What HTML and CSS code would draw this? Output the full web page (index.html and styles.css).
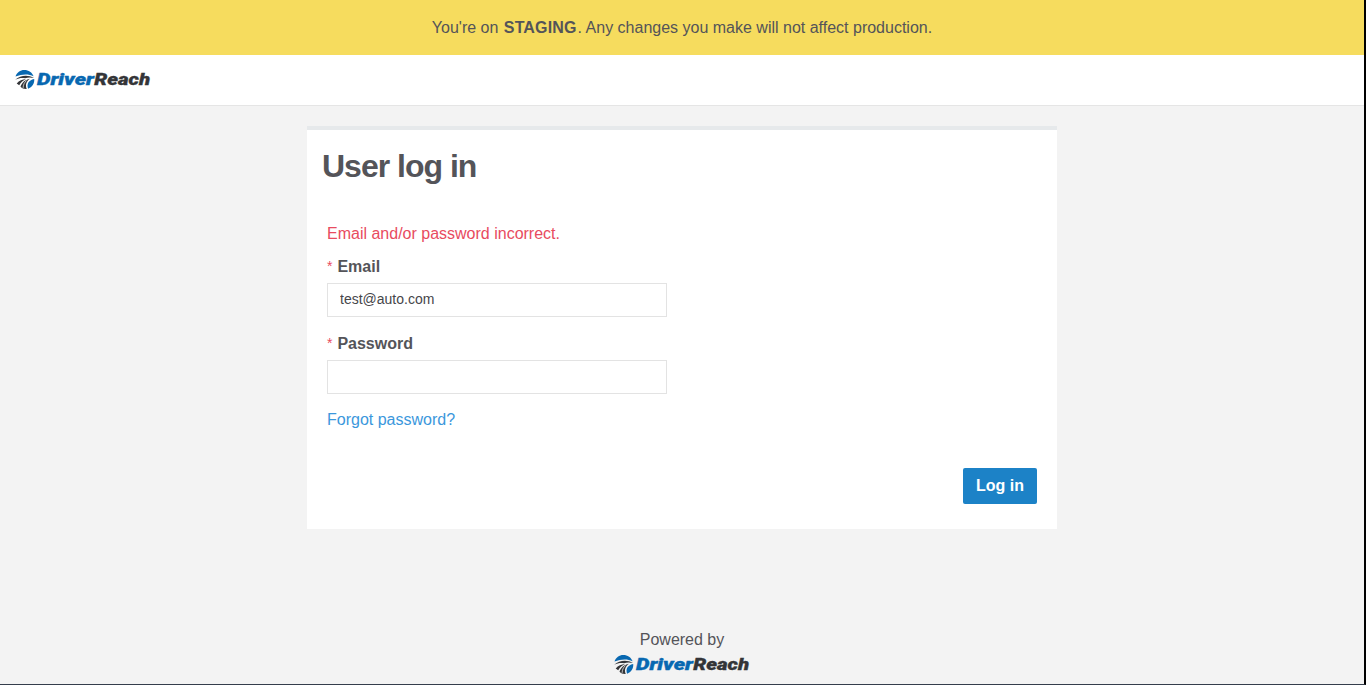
FILE: index.html
```html
<!DOCTYPE html>
<html lang="en">
<head>
<meta charset="utf-8">
<title>DriverReach - User log in</title>
<link rel="stylesheet" href="styles.css">
</head>
<body>
<div class="page">
  <div class="notice"><p>You're on <strong>STAGING</strong>. Any changes you make will not affect production.</p></div>
  <header class="topbar">
    <svg class="logo" viewBox="0 0 136 22" role="img" aria-label="DriverReach">
      <path class="logo-blue" d="M.5 7.500C1.900 3.400 5.200 1 9.300 1c4.300 0 7.900 2.400 9.300 6.300C13.500 4.600 7 4.900.5 7.500z"/>
      <path class="logo-dark" d="M.2 10.700C5.200 6.600 12.700 5.300 19 9.100c-3.300-1-6.300-.9-8.900.2C6.700 8.700 3.500 9.300.2 10.700z"/>
      <path class="logo-dark" d="M1.700 14.500c2.500-2.700 5.800-4.200 9.200-4.400-2.700 1.400-5.100 3.300-6.700 6.100z"/>
      <path class="logo-dark" d="M5.500 17.800c1.200-3.600 4-6.900 9.500-8-4 2.700-4.800 6.300-3.300 10.100-2.300.2-4.500-.4-6.200-2.100z"/>
      <path class="logo-blue" d="M19.200 10c.5 4.600-2.200 8.400-6.100 9.700-1.500-4.600.1-8.400 6.100-9.700z"/>
      <path class="logo-line" d="M8.100 18.900c.1-3 1.200-5.500 3.500-7.400"/>
      <text class="wordmark logo-blue" transform="translate(22 16.300) scale(1.340 1)">Driver</text>
      <text class="wordmark logo-dark" transform="translate(79.300 16.300) scale(1.280 1)">Reach</text>
    </svg>
  </header>
  <main class="card">
    <h1 class="title">User log in</h1>
    <form class="form">
      <p class="error">Email and/or password incorrect.</p>
      <label class="label" for="email"><span class="required">*</span> Email</label>
      <input class="field" id="email" type="text" value="test@auto.com">
      <label class="label" for="password"><span class="required">*</span> Password</label>
      <input class="field" id="password" type="password">
      <a class="forgot" href="#">Forgot password?</a>
      <button class="submit" type="button">Log in</button>
    </form>
  </main>
  <footer class="footer">
    <span>Powered by</span>
    <svg class="logo" viewBox="0 0 136 22" role="img" aria-label="DriverReach">
      <path class="logo-blue" d="M.5 7.500C1.900 3.400 5.200 1 9.300 1c4.300 0 7.900 2.400 9.300 6.300C13.500 4.600 7 4.900.5 7.500z"/>
      <path class="logo-dark" d="M.2 10.700C5.200 6.600 12.700 5.300 19 9.100c-3.300-1-6.300-.9-8.900.2C6.700 8.700 3.500 9.300.2 10.700z"/>
      <path class="logo-dark" d="M1.700 14.500c2.500-2.700 5.800-4.200 9.200-4.400-2.700 1.400-5.100 3.300-6.700 6.100z"/>
      <path class="logo-dark" d="M5.500 17.800c1.200-3.600 4-6.900 9.500-8-4 2.700-4.800 6.300-3.300 10.100-2.300.2-4.500-.4-6.200-2.100z"/>
      <path class="logo-blue" d="M19.200 10c.5 4.600-2.200 8.400-6.100 9.700-1.500-4.600.1-8.400 6.100-9.700z"/>
      <path class="logo-line" d="M8.100 18.900c.1-3 1.200-5.500 3.500-7.400"/>
      <text class="wordmark logo-blue" transform="translate(22 16.300) scale(1.340 1)">Driver</text>
      <text class="wordmark logo-dark" transform="translate(79.300 16.300) scale(1.280 1)">Reach</text>
    </svg>
  </footer>
</div>
</body>
</html>
```
FILE: styles.css
```css
* { box-sizing: border-box; }
body {
  margin: 0;
  color: #545459;
  font: 16px/24px "Liberation Sans", Arial, sans-serif;
}
.page {
  display: flex;
  flex-direction: column;
  align-items: center;
  height: 685px;
  overflow: hidden;
  background: #f3f3f3;
  border-right: 2px solid #000;
  border-bottom: 1px solid #343d4b;
}
.notice {
  width: 100%;
  height: 55px;
  padding-top: 16px;
  text-align: center;
  background: #f6dc5e;
}
.notice p { margin: 0; }
.notice strong { margin: 0 1px; letter-spacing: .15px; }
.topbar {
  width: 100%;
  height: 51px;
  padding: 14px 15px;
  background: #fff;
  border-bottom: 1px solid #e5e5e5;
}
.logo { display: block; width: 136px; height: 22px; overflow: visible; }
.logo-blue { fill: #0868b1; stroke: #0868b1; stroke-width: 0; }
.logo-dark { fill: #343538; stroke: #343538; stroke-width: 0; }
.logo-line { fill: none; stroke: #fff; stroke-width: .7; }
.wordmark { font: italic 900 16px Roboto, sans-serif; stroke-width: .35px; }
.card {
  width: 750px;
  height: 403px;
  margin-top: 20px;
  padding: 16px 20px 25px;
  background: #fff;
  border-top: 4px solid #e6e9eb;
}
.title {
  margin: 0 0 0 -5px;
  font-size: 32px;
  line-height: 40px;
  letter-spacing: -1px;
}
.form { display: flex; flex-direction: column; align-items: flex-start; margin-top: 36px; }
.error { margin: 0 0 9px; color: #e84b60; }
.label { margin-bottom: 4px; font-weight: 700; }
.required { margin-right: .5px; color: #e84b60; font-weight: 400; font-size: 14px; position: relative; top: -1px; }
.field {
  width: 340px;
  height: 34px;
  margin-bottom: 15px;
  padding: 0 12px 2px;
  color: #46464a;
  font: 14px "Liberation Sans", Arial, sans-serif;
  background: #fff;
  border: 1px solid #e3e3e3;
  border-radius: 0;
}
.forgot { margin-top: -1px; color: #3b97dc; text-decoration: none; }
.submit {
  align-self: flex-end;
  width: 74px;
  height: 36px;
  margin-top: 36px;
  padding: 0;
  color: #fff;
  font: 700 16px "Liberation Sans", Arial, sans-serif;
  background: #1c82c7;
  border: 0;
  border-radius: 2px;
}
.footer { display: flex; flex-direction: column; align-items: center; gap: 2px; margin-top: 99px; }
```
